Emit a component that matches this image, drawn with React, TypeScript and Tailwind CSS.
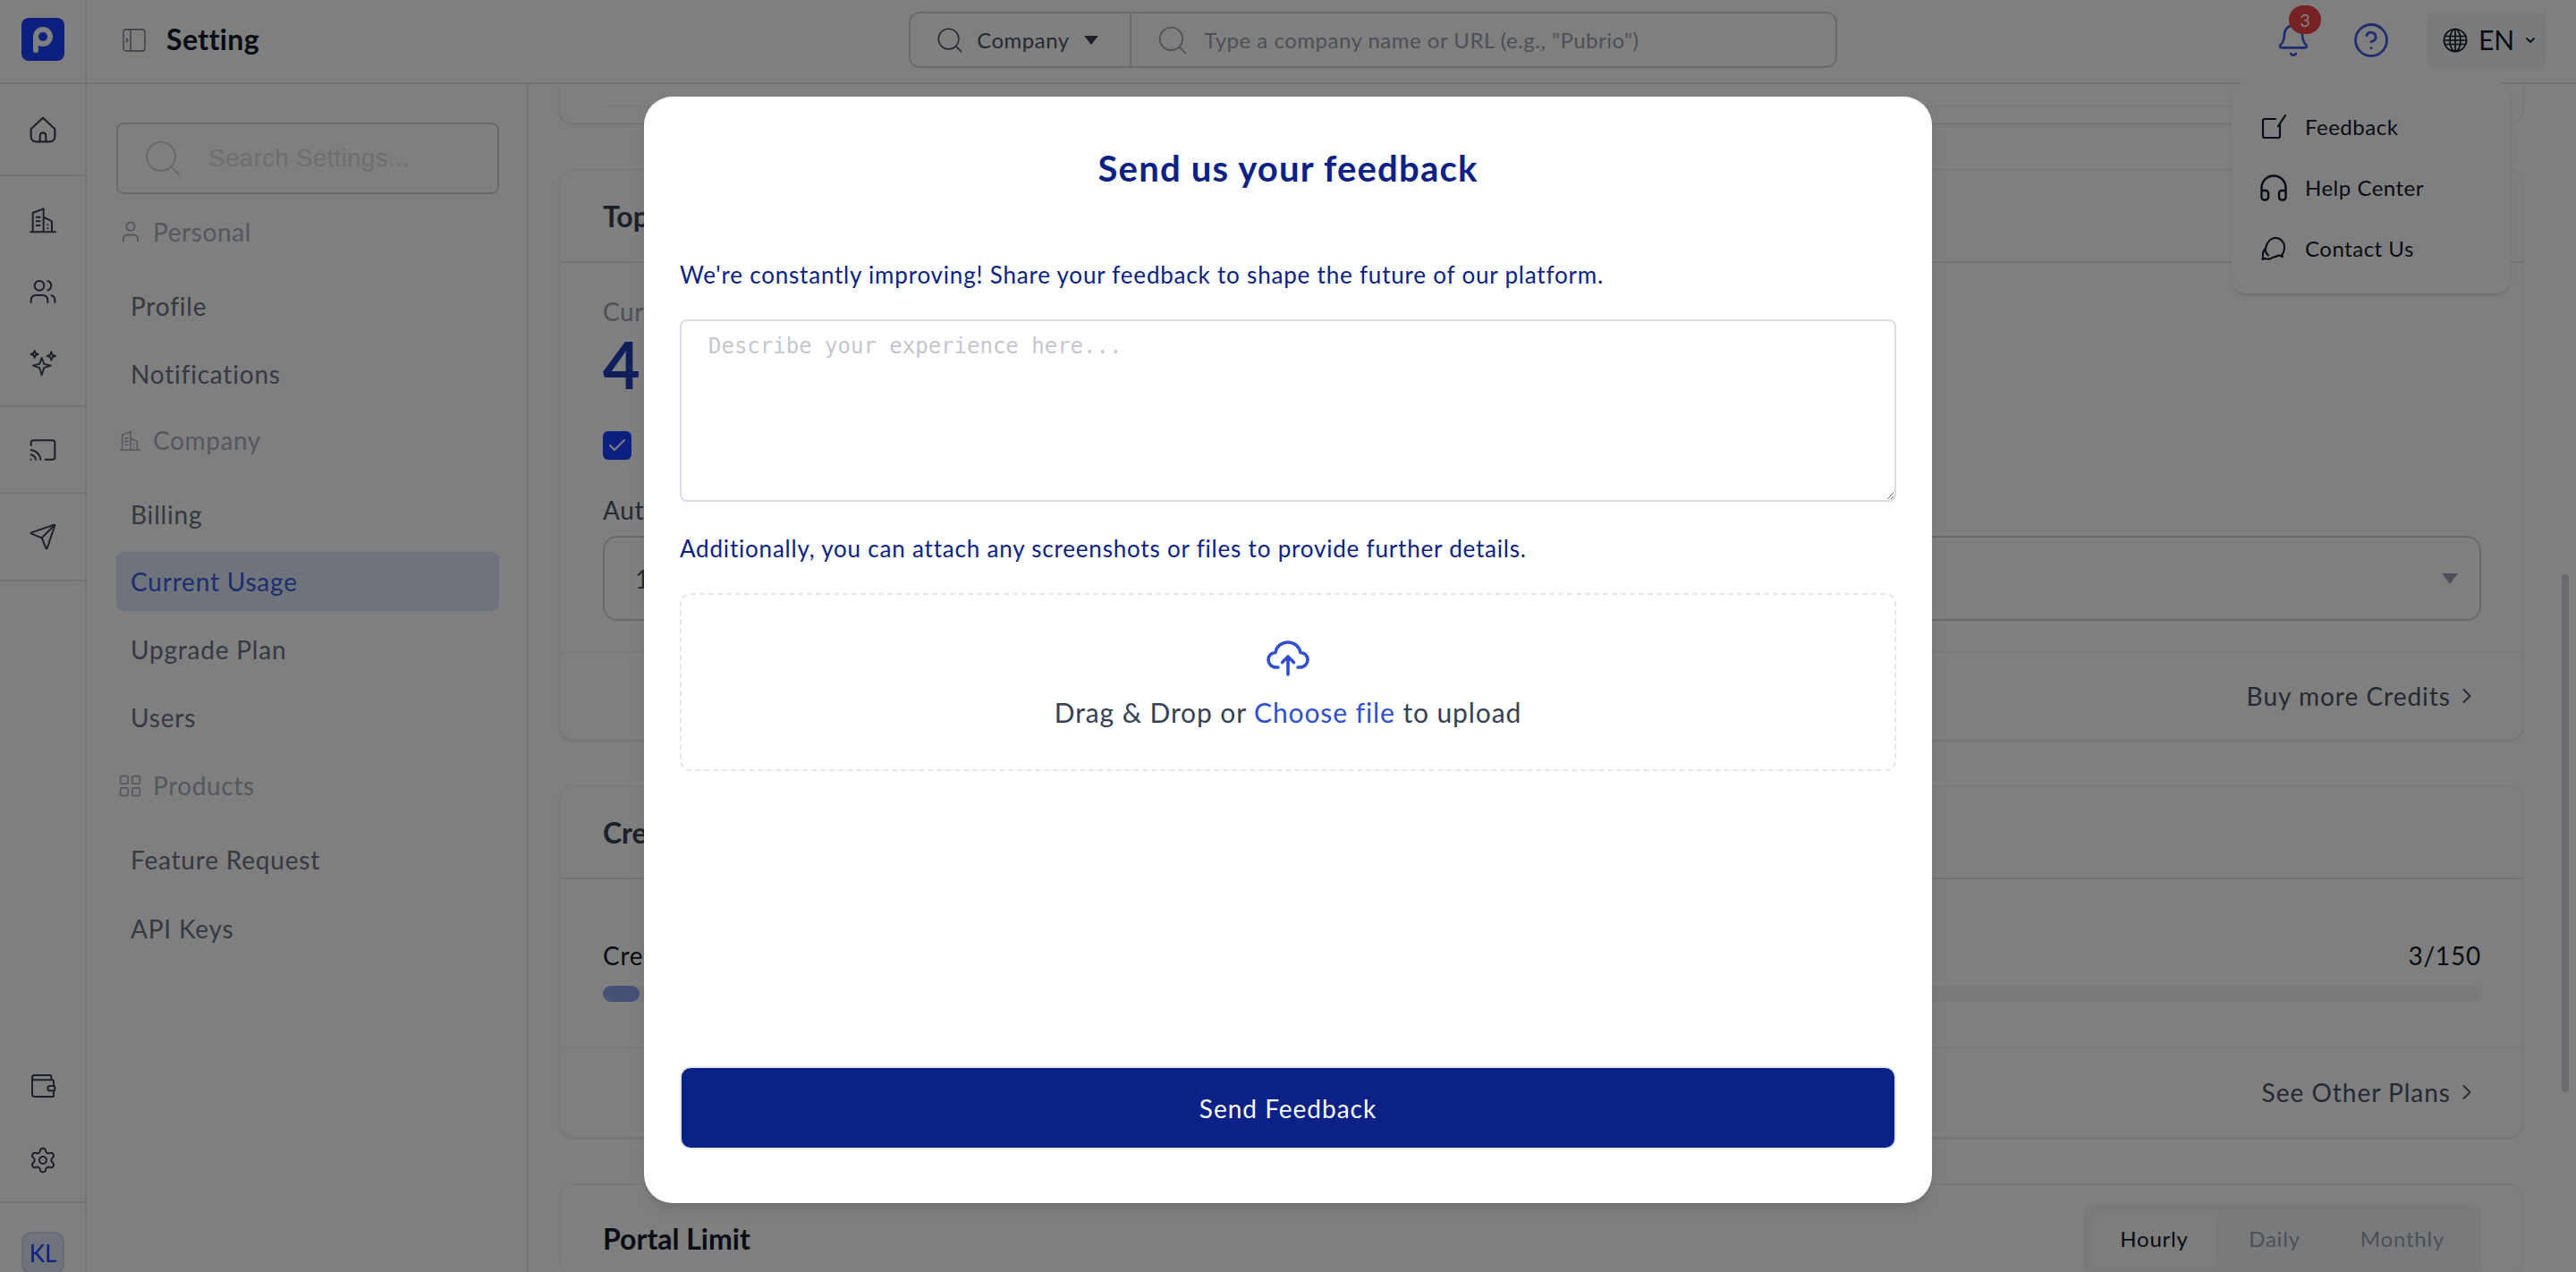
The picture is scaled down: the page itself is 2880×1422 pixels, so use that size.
import React from 'react';
import { Bell, ChevronDown, ChevronRight, CircleHelp, Cast, Check, Headphones, Search, Send, Settings, User, Users, Wallet, LayoutGrid } from 'lucide-react';

const BuildingIcon = ({ className }: { className?: string }) => (
  <svg viewBox="0 0 24 24" fill="none" stroke="currentColor" strokeWidth="1.5" strokeLinecap="round" strokeLinejoin="round" className={className}>
    <path d="M1.5 22h21M3.5 22V6l9-3.5V22M12.5 9.5l7 3.5v9M6.5 9.5h3M6.5 13h3M6.5 16.500h3M16 16v.01M16 19v.01" />
  </svg>
);

const HomeIcon = ({ className }: { className?: string }) => (
  <svg viewBox="0 0 24 24" fill="none" stroke="currentColor" strokeWidth="1.6" strokeLinecap="round" strokeLinejoin="round" className={className}>
    <path d="M2 11.500 12 2l10 9.500V18a4 4 0 0 1-4 4H6a4 4 0 0 1-4-4z" />
    <path d="M9.500 22v-5a2.500 2.500 0 0 1 5 0v5" />
  </svg>
);

const SparkIcon = ({ className }: { className?: string }) => (
  <svg viewBox="0 0 24 24" fill="none" stroke="currentColor" strokeWidth="1.4" strokeLinejoin="round" className={className}>
    <path d="M11 7.500 12.900 12.600 18.500 14 12.900 15.900 11 22 9.100 15.900 3.500 14 9.100 12.600Z" />
    <path d="M5 1.500 5.800 3.700 8 4.500 5.800 5.300 5 7.500 4.200 5.300 2 4.500 4.200 3.700Z" />
    <path d="M19 2.500 19.900 5.100 22.500 6 19.900 6.900 19 9.500 18.100 6.900 15.500 6 18.100 5.100Z" />
  </svg>
);

const PanelIcon = ({ className }: { className?: string }) => (
  <svg viewBox="0 0 26 26" fill="none" stroke="currentColor" strokeWidth="1.3" strokeLinecap="round" strokeLinejoin="round" className={className}>
    <rect x="1" y="1" width="24" height="24" rx="3" />
    <path d="M9 1v24M4 11l2 2-2 2" />
  </svg>
);

const GlobeIcon = ({ className }: { className?: string }) => (
  <svg viewBox="0 0 28 28" fill="none" stroke="currentColor" strokeWidth="1.7" className={className}>
    <circle cx="14" cy="14" r="12.500" />
    <ellipse cx="14" cy="14" rx="6" ry="12.500" />
    <path d="M14 1.500v25M2.500 9.500h23M1.500 14h25M2.500 18.500h23" />
  </svg>
);

const FeedbackIcon = ({ className }: { className?: string }) => (
  <svg viewBox="0 0 28 28" fill="none" stroke="currentColor" strokeWidth="2.200" strokeLinecap="round" strokeLinejoin="round" className={className}>
    <path d="M16 5H4a2 2 0 0 0-2 2v17a2 2 0 0 0 2 2h15a2 2 0 0 0 2-2V11M27 1l-8 12" />
  </svg>
);

const ChatIcon = ({ className }: { className?: string }) => (
  <svg viewBox="0 0 28 28" fill="none" stroke="currentColor" strokeWidth="2" strokeLinecap="round" strokeLinejoin="round" className={className}>
    <path d="M8 21.500C5.500 19.500 4.500 16.500 5 13.500 6 7 10.500 2 16 2c5.500 0 10 4.500 10 10 0 3.500-1 7-3 9l1 2-4-1.500" />
    <path d="M5 13.500C2.500 16 1.500 19 2 22l-.5 4 3-1c2.500 1 5.500 1 8-1 2-.5 4-1 7-2.500" />
  </svg>
);

const UploadIcon = ({ className }: { className?: string }) => (
  <svg viewBox="0 0 48 40" fill="none" stroke="currentColor" strokeWidth="3.600" strokeLinecap="round" strokeLinejoin="round" className={className}>
    <path d="M13 30H11C5.500 30 2 26 2 21.500 2 17 5.500 13.500 10 13.500 11 6.500 17 2 24 2c7 0 12.500 4.500 14 11.500 4.500 0 8 3.500 8 8 0 4.500-3.500 8.500-9 8.500h-2" />
    <path d="M24 38V18M17.500 24.500 24 18l6.500 6.500" />
  </svg>
);

const Logo = () => (
  <svg viewBox="0 0 48 48" className="w-12 h-12 shrink-0">
    <rect width="48" height="48" rx="8" fill="#1641ff" />
    <circle cx="24" cy="21" r="8" fill="none" stroke="#fff" strokeWidth="6" />
    <path d="M13 21h6v15a3 3 0 0 1-6 0z" fill="#fff" />
  </svg>
);

const railIcon = 'w-8 h-8 -my-0.5 text-gray-700';

const SectionLabel = ({ icon, label, className }: { icon: React.ReactNode; label: string; className?: string }) => (
  <div className={`flex items-center h-9 gap-[10px] text-[28px] tracking-[0.6px] text-[#a8b0bd] ${className ?? ''}`}>
    <span className="flex items-center justify-center w-[31px]">{icon}</span>
    <span>{label}</span>
  </div>
);

const NavItem = ({ label, active, className }: { label: string; active?: boolean; className?: string }) => (
  <div
    className={`flex items-center h-[66px] px-4 rounded-lg text-[28px] tracking-[0.8px] ${
      active ? 'bg-[#dfe6f8] text-[#3a5be0]' : 'text-gray-500'
    } ${className ?? ''}`}
  >
    {label}
  </div>
);

const App = () => {
  return (
    <div className="relative w-full h-screen overflow-hidden bg-white font-['Lato',sans-serif] text-gray-900">
      {/* header */}
      <header className="flex h-[94px] border-b-2 border-gray-200">
        <div className="w-[97px] h-full border-r-2 border-gray-200 pl-6 pt-5 shrink-0">
          <Logo />
        </div>
        <div className="flex flex-1 items-center pb-[3px]">
          <PanelIcon className="w-[26px] h-[26px] ml-[40px] text-gray-500" />
          <h1 className="ml-[23px] -mt-[2px] text-[32px] font-bold tracking-[0.4px] text-gray-900">Setting</h1>
          <div className="flex items-center ml-[726px] w-[1038px] h-[63px] border-2 border-gray-300 rounded-xl">
            <div className="flex items-center w-[247px] h-full border-r-2 border-gray-300 pl-[27px] text-gray-600">
              <Search className="w-[34px] h-[34px]" strokeWidth={1.1} />
              <span className="ml-[13px] text-[24px] tracking-[0.5px]">Company</span>
              <span className="ml-4 w-0 h-0 border-x-[8px] border-x-transparent border-t-[10px] border-t-gray-700" />
            </div>
            <Search className="ml-[27px] w-[38px] h-[38px] text-gray-400" strokeWidth={1.1} />
            <span className="ml-[16px] text-[24px] tracking-[0.5px] text-gray-400">Type a company name or URL (e.g., "Pubrio")</span>
          </div>
          <div className="flex items-center ml-auto pr-[33px]">
            <div className="relative">
              <Bell className="w-10 h-10 text-[#3a5be0]" strokeWidth={1.6} />
              <span className="absolute -top-[19px] left-[15px] flex items-center justify-center w-9 h-8 rounded-full bg-[#ef4444] text-white text-[20px]">3</span>
            </div>
            <CircleHelp className="ml-[46px] w-[42px] h-[42px] text-[#3a5be0]" strokeWidth={1.6} />
            <div className="flex items-center ml-[41px] w-[134px] h-16 rounded-xl bg-gray-100 pl-[18px]">
              <GlobeIcon className="w-[28px] h-[28px] text-gray-900" />
              <span className="ml-[12px] text-[30px] text-gray-900">EN</span>
              <ChevronDown className="ml-[10px] w-[16px] h-[16px] text-gray-800" strokeWidth={3} />
            </div>
          </div>
        </div>
      </header>

      <div className="flex h-[1328px]">
        {/* icon rail */}
        <nav className="flex flex-col w-[97px] shrink-0 border-r-2 border-gray-200">
          <div className="flex items-center justify-center h-[103px] border-b-2 border-gray-200">
            <HomeIcon className={railIcon} />
          </div>
          <div className="flex flex-col items-center gap-[52px] h-[258px] pt-[35px] border-b-2 border-gray-200">
            <BuildingIcon className={railIcon} />
            <Users className={railIcon} strokeWidth={1.5} />
            <SparkIcon className={railIcon} />
          </div>
          <div className="flex items-center justify-center h-[97px] border-b-2 border-gray-200">
            <Cast className={railIcon} strokeWidth={1.5} />
          </div>
          <div className="flex items-center justify-center h-[98px] border-b-2 border-gray-200">
            <Send className={railIcon} strokeWidth={1.5} />
          </div>
          <div className="flex flex-col items-center gap-[55px] mt-auto pb-[32px] border-b-2 border-gray-200">
            <Wallet className={railIcon} strokeWidth={1.5} />
            <Settings className={railIcon} strokeWidth={1.5} />
          </div>
          <div className="h-[77px] pt-[32px] pl-6">
            <div className="flex items-center justify-center w-12 h-12 rounded-xl bg-[#dfe6f8] border-2 border-[#cfd8f0] text-[#1641ff] text-[26px]">KL</div>
          </div>
        </nav>

        {/* settings sidebar */}
        <aside className="w-[494px] shrink-0 border-r-2 border-gray-200 pl-[33px] pr-[31px] pt-[43px]">
          <div className="flex items-center h-20 border-2 border-gray-300 rounded-lg pl-[26px]">
            <Search className="w-12 h-12 text-gray-300" strokeWidth={1.1} />
            <span className="ml-[27px] font-['Liberation_Sans',sans-serif] text-[28px] tracking-[0.2px] text-[#dcdce0]">Search Settings...</span>
          </div>
          <SectionLabel icon={<User className="w-[28px] h-[28px]" strokeWidth={1.6} />} label="Personal" className="mt-6" />
          <NavItem label="Profile" className="mt-[32px]" />
          <NavItem label="Notifications" className="mt-[10px]" />
          <SectionLabel icon={<BuildingIcon className="w-[25px] h-[25px]" />} label="Company" className="mt-[23px]" />
          <NavItem label="Billing" className="mt-[32px]" />
          <NavItem label="Current Usage" active className="mt-[9px]" />
          <NavItem label="Upgrade Plan" className="mt-[10px]" />
          <NavItem label="Users" className="mt-[10px]" />
          <SectionLabel icon={<LayoutGrid className="w-[29px] h-[29px]" strokeWidth={1.4} />} label="Products" className="mt-[25px]" />
          <NavItem label="Feature Request" className="mt-[32px]" />
          <NavItem label="API Keys" className="mt-[11px]" />
        </aside>

        {/* main content, scrolled */}
        <main className="flex-1 overflow-hidden pl-[34px] pr-[59px]">
          <div className="h-[44px] pt-[24px] rounded-b-2xl border border-t-0 border-gray-100 shadow-sm">
            <div className="mx-[49px] border-t-2 border-gray-100" />
          </div>

          <section className="mt-[51px] rounded-2xl border-2 border-gray-100 shadow-sm">
            <div className="flex items-center h-[103px] px-[47px] border-b-2 border-gray-200 text-[32px] font-bold text-gray-700">Top Up Credits</div>
            <div className="pl-[47px] pr-[45px] pt-[33px] pb-[34px]">
              <div className="h-9 text-[28px] tracking-[0.6px] text-gray-400">Current Credits</div>
              <div className="mt-2 h-[72px] text-[72px] leading-[72px] font-bold tracking-[3px] text-[#1e3fb8]">47</div>
              <div className="flex items-center justify-center mt-[39px] w-8 h-8 rounded-md bg-[#1641ff]">
                <Check className="w-6 h-6 text-white" strokeWidth={2} />
              </div>
              <div className="mt-[35px] h-9 text-[28px] tracking-[0.6px] text-gray-600">Auto Top Up</div>
              <div className="relative flex items-center mt-[14px] h-[95px] rounded-2xl border-2 border-gray-300 pl-[34px] text-[28px] text-gray-600">
                100
                <span className="absolute right-[24px] w-0 h-0 border-x-[9px] border-x-transparent border-t-[12px] border-t-gray-400" />
              </div>
            </div>
            <div className="flex items-center justify-end h-[98px] pl-[47px] pr-[47px] border-t-2 border-gray-100 text-[28px] tracking-[1px] text-gray-600">
              Buy more Credits
              <ChevronRight className="w-7 h-7 ml-1 text-gray-600" strokeWidth={1.6} />
            </div>
          </section>

          <section className="mt-[50px] rounded-2xl border-2 border-gray-100 shadow-sm">
            <div className="flex items-center h-[103px] px-[47px] border-b-2 border-gray-200 text-[32px] font-bold text-gray-700">Credit Usage</div>
            <div className="pl-[47px] pr-[45px] pt-[64px] pb-[50px]">
              <div className="flex justify-between h-9 text-[28px] tracking-[0.8px] text-gray-900">
                <span>Credits used</span>
                <span>3/150</span>
              </div>
              <div className="mt-[19px] h-[18px] rounded-full bg-gray-100">
                <div className="w-[41px] h-full rounded-full bg-[#8ea2f0]" />
              </div>
            </div>
            <div className="flex items-center justify-end h-[100px] pl-[47px] pr-[47px] border-t-2 border-gray-100 text-[28px] tracking-[1px] text-gray-600">
              See Other Plans
              <ChevronRight className="w-7 h-7 ml-1 text-gray-600" strokeWidth={1.6} />
            </div>
          </section>

          <section className="mt-[51px] rounded-2xl border-2 border-gray-100 pl-[47px] pr-[45px] pt-[20px]">
            <div className="flex items-center justify-between">
              <span className="text-[32px] font-bold text-gray-900">Portal Limit</span>
              <div className="flex items-center h-[80px] px-[10px] rounded-xl bg-gray-100 text-[24px] tracking-[0.8px]">
                <span className="flex items-center justify-center w-[139px] h-[61px] rounded-lg bg-[#fafafa] text-gray-900">Hourly</span>
                <span className="flex items-center justify-center w-[130px] text-gray-400">Daily</span>
                <span className="flex items-center justify-center w-[156px] text-gray-400">Monthly</span>
              </div>
            </div>
          </section>
        </main>
      </div>

      {/* scrollbar thumb */}
      <div className="absolute top-[642px] right-[8px] w-2 h-[579px] rounded-full bg-gray-300" />

      {/* help menu, open under the dialog backdrop */}
      <div className="absolute top-[92px] left-[2495px] w-[311px] h-[236px] rounded-2xl bg-white shadow-md flex flex-col justify-center gap-8 pl-[29px] text-[24px] tracking-[0.5px] text-gray-900">
        <span className="absolute -top-[11px] left-[142px] w-0 h-0 border-x-[14px] border-x-transparent border-b-[11px] border-b-white" />
        <div className="flex items-center h-9 gap-[17px]"><span className="flex items-center justify-center w-9"><FeedbackIcon className="w-7 h-7" /></span><span>Feedback</span></div>
        <div className="flex items-center h-9 gap-[17px]"><Headphones className="w-9 h-9" strokeWidth={1.6} /><span>Help Center</span></div>
        <div className="flex items-center h-9 gap-[17px]"><span className="flex items-center justify-center w-9"><ChatIcon className="w-7 h-7" /></span><span>Contact Us</span></div>
      </div>

      {/* dialog */}
      <div className="absolute inset-0 bg-black/50 flex justify-center pt-[108px]">
        <div className="flex flex-col w-[1440px] h-[1237px] rounded-[32px] bg-white shadow-lg px-10">
          <h2 className="mt-[56px] h-12 text-center text-[40px] leading-[48px] font-bold tracking-[1.2px] text-[#0a2287]">Send us your feedback</h2>
          <p className="mt-[75px] h-10 text-[26px] leading-10 tracking-[0.8px] text-[#0a2287]">We're constantly improving! Share your feedback to shape the future of our platform.</p>
          <textarea
            readOnly
            placeholder="Describe your experience here..."
            className="mt-[30px] h-[204px] w-full rounded-lg border-2 border-[#dcdde4] px-[30px] py-[10px] font-['DejaVu_Sans_Mono',monospace] text-[24px] placeholder:text-[#c4c7cf]"
          />
          <p className="mt-[32px] h-10 text-[26px] leading-10 tracking-[0.8px] text-[#0a2287]">Additionally, you can attach any screenshots or files to provide further details.</p>
          <div className="flex flex-col items-center mt-[30px] h-[199px] rounded-xl border-2 border-dashed border-gray-200 pt-[51px]">
            <UploadIcon className="w-12 h-10 text-[#2f4fd0]" />
            <p className="mt-[20px] text-[30px] leading-10 tracking-[0.9px] text-gray-700">
              Drag &amp; Drop or <span className="text-[#2f4fd0]">Choose file</span> to upload
            </p>
          </div>
          <button className="mt-auto mb-[60px] h-[93px] rounded-xl border-2 border-gray-200 bg-[#0a2287] text-white text-[28px] tracking-[1px]">Send Feedback</button>
        </div>
      </div>
    </div>
  );
};

export default App;
